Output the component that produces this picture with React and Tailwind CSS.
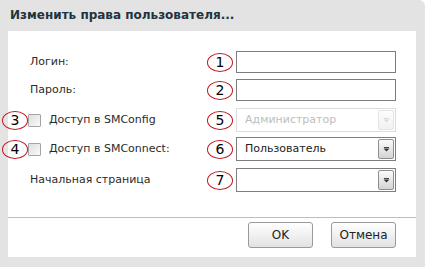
import React from "react";

const font = { fontFamily: '"DejaVu Sans", "Liberation Sans", sans-serif' };

function Badge({ n }) {
  return (
    <div className="w-[26px] h-[19px] shrink-0 rounded-[50%] border-[1.5px] border-[#c0161f] flex items-center justify-center text-[14px] leading-none text-black">
      {n}
    </div>
  );
}

function Arrow({ disabled }) {
  return (
    <div
      className={
        "w-[16px] h-[20px] rounded-[2px] flex items-center justify-center " +
        (disabled
          ? "border border-[#e4e4e4] bg-gradient-to-b from-[#fdfdfd] to-[#f1f1f1]"
          : "border border-[#8e8e8e] bg-gradient-to-b from-[#fbfbfb] to-[#d4d4d4]")
      }
    >
      <svg width="7" height="5" viewBox="0 0 7 5">
        <rect x="1" y="0" width="5" height="1" fill={disabled ? "#dcdcdc" : "#444"} />
        <path d="M0.5 1.5 L6.5 1.5 L3.5 4.5 Z" fill={disabled ? "#dcdcdc" : "#333"} />
      </svg>
    </div>
  );
}

function Checkbox() {
  return (
    <div className="w-[13px] h-[13px] shrink-0 border border-[#a4a4a4] rounded-[1px] bg-gradient-to-br from-[#dedede] to-[#fafafa]" />
  );
}

export default function App() {
  return (
    <div className="w-[427px] h-[267px] bg-white" style={font}>
      <div className="w-[425px] h-[267px] bg-[#e3e3e3] rounded-tr-[6px] flex flex-col">
        <div className="h-[31px] pl-[10px] pt-[7px] text-[12px] font-bold text-[#22333d] leading-[16px]">
          Изменить права пользователя...
        </div>
        <div className="ml-[8px] w-[408px] h-[226px] bg-white flex flex-col text-[11px] text-[#2b2b2b]">
          <div className="pt-[20px] flex flex-col">
            <div className="flex items-center h-[22px]">
              <div className="w-[199px] pl-[22px]">Логин:</div>
              <Badge n="1" />
              <div className="ml-[3px] w-[160px] h-[22px] border border-[#7d7d7d]" />
            </div>
            <div className="flex items-center h-[22px] mt-[6px]">
              <div className="w-[199px] pl-[22px]">Пароль:</div>
              <Badge n="2" />
              <div className="ml-[3px] w-[160px] h-[22px] border border-[#7d7d7d]" />
            </div>
            <div className="flex items-center h-[24px] mt-[7px]">
              <div className="w-[205px] -ml-[6px] flex items-center">
                <Badge n="3" />
                <Checkbox />
                <span className="ml-[8px]">Доступ в SMConfig</span>
              </div>
              <Badge n="5" />
              <div className="ml-[3px] w-[160px] h-[24px] border border-[#dcdcdc] flex items-center justify-between pl-[8px] pr-[1px] text-[#bdbdbd]">
                <span>Администратор</span>
                <Arrow disabled />
              </div>
            </div>
            <div className="flex items-center h-[24px] mt-[5px]">
              <div className="w-[205px] -ml-[6px] flex items-center">
                <Badge n="4" />
                <Checkbox />
                <span className="ml-[8px]">Доступ в SMConnect:</span>
              </div>
              <Badge n="6" />
              <div className="ml-[3px] w-[160px] h-[24px] border border-[#7d7d7d] flex items-center justify-between pl-[8px] pr-[1px] text-[#222]">
                <span>Пользователь</span>
                <Arrow />
              </div>
            </div>
            <div className="flex items-center h-[24px] mt-[7px]">
              <div className="w-[199px] pl-[22px]">Начальная страница</div>
              <Badge n="7" />
              <div className="ml-[3px] w-[160px] h-[24px] border border-[#7d7d7d] flex items-center justify-end pr-[1px]">
                <Arrow />
              </div>
            </div>
          </div>
          <div className="mt-[25px] h-px bg-[#bdbdbd]" />
          <div className="flex justify-end gap-[18px] pr-[20px] pt-[4px] text-[12px] text-[#222]">
            <button className="w-[65px] h-[26px] rounded-[3px] border border-[#9a9a9a] bg-gradient-to-b from-[#ffffff] to-[#e2e2e2] flex items-center justify-center">
              OK
            </button>
            <button className="w-[65px] h-[26px] rounded-[3px] border border-[#9a9a9a] bg-gradient-to-b from-[#ffffff] to-[#e2e2e2] flex items-center justify-center">
              Отмена
            </button>
          </div>
        </div>
      </div>
    </div>
  );
}
